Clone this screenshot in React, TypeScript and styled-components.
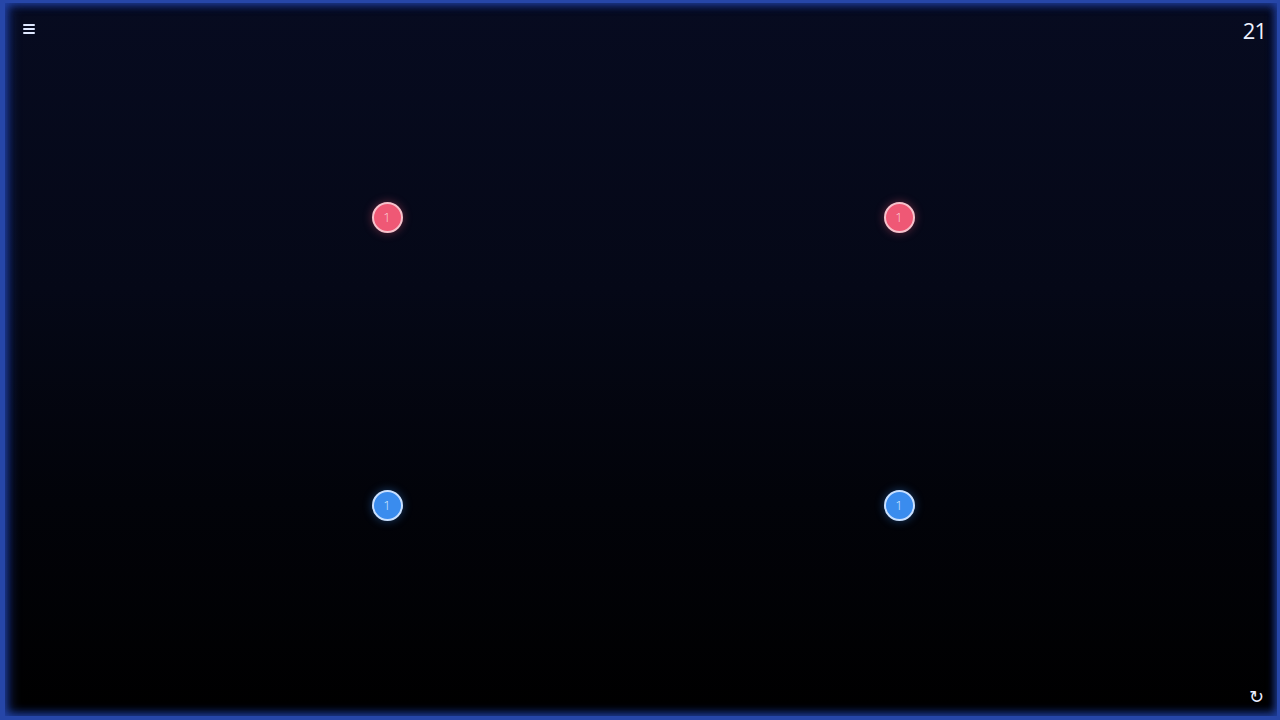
import * as React from 'react';
import styled, { createGlobalStyle } from 'styled-components';

const GlobalStyle = createGlobalStyle`
    html, body {
        margin: 0;
        padding: 0;
        background: #000;
        overflow: hidden;
    }
    * {
        box-sizing: border-box;
    }
`;

const Board = styled.div`
    position: relative;
    width: 1280px;
    height: 720px;
    background: linear-gradient(180deg, #070b20 0%, #050817 40%, #020309 70%, #000000 100%);
    border-style: solid;
    border-color: #2646a8;
    border-width: 3px 3px 4px 5px;
    box-shadow:
        inset 5px 0 12px rgba(40, 80, 200, 0.45),
        inset -3px 0 8px rgba(40, 80, 200, 0.35),
        inset 0 3px 8px rgba(40, 80, 200, 0.35),
        inset 0 -4px 10px rgba(40, 80, 200, 0.45);
    font-family: "DejaVu Sans", "Liberation Sans", sans-serif;
    color: #e6ecff;
`;

const TopBar = styled.div`
    display: flex;
    justify-content: space-between;
    align-items: flex-start;
    padding: 15px 11px 0 18px;
`;

const MenuButton = styled.button`
    background: none;
    border: 0;
    padding: 0;
    margin-top: 6px;
    width: 12px;
    display: flex;
    flex-direction: column;
    gap: 2px;
    cursor: pointer;
    span {
        display: block;
        height: 2px;
        background: #dfe8ff;
        border-radius: 1px;
    }
`;

const Score = styled.div`
    font-family: "Open Sans", sans-serif;
    font-weight: 400;
    font-size: 22px;
    letter-spacing: -1px;
    color: #eef2ff;
    line-height: 24px;
`;

const Reset = styled.button`
    position: absolute;
    right: 13px;
    bottom: 9px;
    background: none;
    border: 0;
    padding: 0;
    color: #e8eeff;
    font-family: "DejaVu Sans", sans-serif;
    font-size: 18px;
    line-height: 20px;
    cursor: pointer;
`;

const Node = styled.div<{ tone: 'red' | 'blue' }>`
    position: absolute;
    width: 31px;
    height: 31px;
    margin: -15.5px 0 0 -15.5px;
    border-radius: 50%;
    display: flex;
    align-items: center;
    justify-content: center;
    font-family: "Open Sans", sans-serif;
    font-weight: 300;
    font-size: 13px;
    background: ${p => (p.tone === 'red' ? '#ef5875' : '#3a8cee')};
    border: 2px solid ${p => (p.tone === 'red' ? '#f6c2cc' : '#c9e0ff')};
    color: ${p => (p.tone === 'red' ? '#fbd3da' : '#dcecff')};
    box-shadow: 0 0 10px ${p => (p.tone === 'red' ? 'rgba(239, 88, 117, 0.4)' : 'rgba(58, 140, 238, 0.4)')};
`;

const nodes: { x: number; y: number; tone: 'red' | 'blue'; value: number }[] = [
    { x: 387, y: 217, tone: 'red', value: 1 },
    { x: 899, y: 217, tone: 'red', value: 1 },
    { x: 387, y: 505, tone: 'blue', value: 1 },
    { x: 899, y: 505, tone: 'blue', value: 1 },
];

const App = () => (
    <>
        <GlobalStyle />
        <Board>
            <TopBar>
                <MenuButton aria-label="menu">
                    <span />
                    <span />
                    <span />
                </MenuButton>
                <Score>21</Score>
            </TopBar>
            {nodes.map((n, i) => (
                <Node key={i} tone={n.tone} style={{ left: n.x - 5, top: n.y - 3 }}>
                    {n.value}
                </Node>
            ))}
            <Reset aria-label="reset">↻</Reset>
        </Board>
    </>
);

export default App;
